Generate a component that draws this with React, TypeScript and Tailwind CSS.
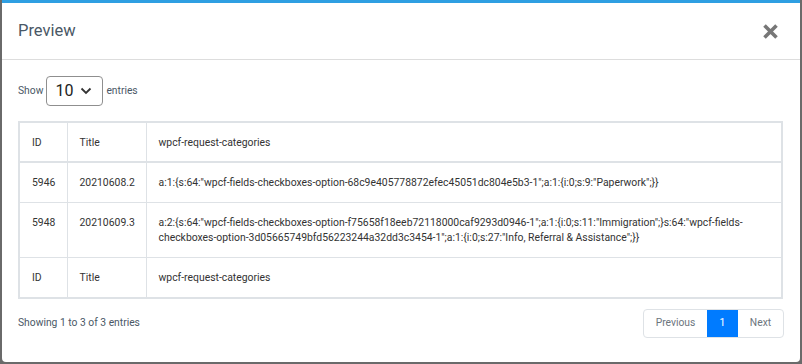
import React from "react";

const rows = [
  {
    id: "5946",
    title: "20210608.2",
    value: 'a:1:{s:64:"wpcf-fields-checkboxes-option-68c9e405778872efec45051dc804e5b3-1";a:1:{i:0;s:9:"Paperwork";}}',
  },
  {
    id: "5948",
    title: "20210609.3",
    value:
      'a:2:{s:64:"wpcf-fields-checkboxes-option-f75658f18eeb72118000caf9293d0946-1";a:1:{i:0;s:11:"Immigration";}s:64:"wpcf-fields-checkboxes-option-3d05665749bfd56223244a32dd3c3454-1";a:1:{i:0;s:27:"Info, Referral & Assistance";}}',
  },
];

function HeadRow({ top }: { top?: boolean }) {
  return (
    <tr className={top ? "border-b-2 border-[#dee2e6]" : ""}>
      <td className="border-r border-[#dee2e6] px-[12px] h-[40px]">ID</td>
      <td className="border-r border-[#dee2e6] px-[12px]">Title</td>
      <td className="px-[12px]">wpcf-request-categories</td>
    </tr>
  );
}

export default function App() {
  return (
    <div
      className="w-[802px] h-[364px] bg-[#6a6a6a] pl-[2px] pr-[2px] pb-[2px]"
      style={{ fontFamily: "Roboto, 'Liberation Sans', sans-serif" }}
    >
      <div className="h-[362px] bg-white rounded-b-[4px] border-t-[3px] border-[#2f9fe2] flex flex-col">
        <div className="h-[57px] border-b border-[#dddddd] flex items-center justify-between pl-[16px] pr-[21px]">
          <h2 className="text-[16.5px] text-[#4a5866]">Preview</h2>
          <svg width="17" height="17" viewBox="0 0 17 17">
            <path d="M2.5 2.5 L14.5 14.5 M14.5 2.5 L2.5 14.5" stroke="#777" strokeWidth="3.6" strokeLinecap="butt" />
          </svg>
        </div>

        <div className="px-[16px]">
          <div className="flex items-center h-[30px] mt-[16px] text-[10.3px] text-[#4a5866]">
            <span>Show</span>
            <div className="mx-[3px] w-[57px] h-[30px] border border-[#8f8f8f] rounded-[4px] flex items-center justify-between pl-[8px] pr-[10px]">
              <span className="text-[16px] text-[#222]">10</span>
              <svg width="12" height="8" viewBox="0 0 12 8">
                <path d="M1.5 1.5 L6 6 L10.5 1.5" fill="none" stroke="#333" strokeWidth="1.8" />
              </svg>
            </div>
            <span>entries</span>
          </div>

          <table className="mt-[15px] w-[765px] table-fixed border-collapse border-2 border-[#dee2e6] text-[10.4px] text-[#333] leading-[15px]">
            <colgroup>
              <col className="w-[48px]" />
              <col className="w-[79px]" />
              <col />
            </colgroup>
            <tbody>
              <HeadRow top />
              {rows.map((r) => (
                <tr key={r.id} className="border-b border-[#dee2e6]">
                  <td className="border-r border-[#dee2e6] px-[12px] py-[12px] align-top">{r.id}</td>
                  <td className="border-r border-[#dee2e6] px-[12px] py-[12px] align-top">{r.title}</td>
                  <td className="px-[12px] py-[12px] align-top">{r.value}</td>
                </tr>
              ))}
              <HeadRow />
            </tbody>
          </table>

          <div className="flex items-center justify-between mt-[10px]">
            <span className="text-[10.3px] text-[#4a5866]">Showing 1 to 3 of 3 entries</span>
            <div className="flex h-[29px] text-[10.3px] border border-[#dee2e6] rounded-[4px] overflow-hidden">
              <span className="w-[63px] flex items-center justify-center text-[#6c757d]">Previous</span>
              <span className="w-[31px] flex items-center justify-center bg-[#007bff] text-white">1</span>
              <span className="w-[45px] flex items-center justify-center text-[#6c757d]">Next</span>
            </div>
          </div>
        </div>
      </div>
    </div>
  );
}
